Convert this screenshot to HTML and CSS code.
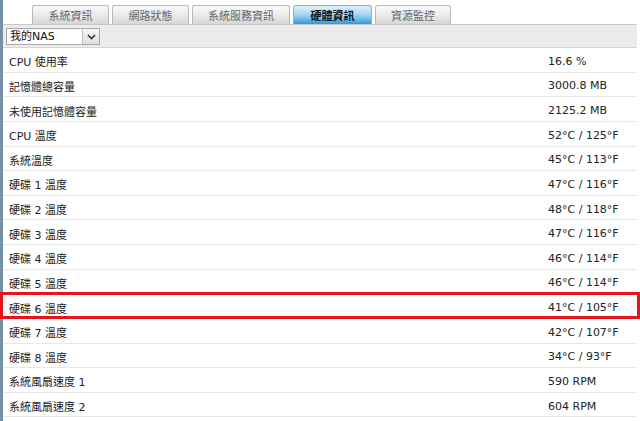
FILE: index.html
```html
<!DOCTYPE html>
<html lang="zh-Hant">
<head>
  <meta charset="UTF-8" />
  <title>硬體資訊</title>
  <link rel="stylesheet" href="styles.css">
</head>
<body>
  <div class="stripe"></div>
  <div class="panel">
    <div class="tabs">
      <div class="tab t1">系統資訊</div>
      <div class="tab t2">網路狀態</div>
      <div class="tab t3">系統服務資訊</div>
      <div class="tab t4 active">硬體資訊</div>
      <div class="tab t5">資源監控</div>
    </div>

    <div class="toolbar">
      <div class="select">
        <span class="select-text">我的NAS</span>
        <span class="select-btn">
          <svg width="9" height="6" viewBox="0 0 9 6"><path d="M1 1 L4.5 4.5 L8 1" fill="none" stroke="#333" stroke-width="1.6"/></svg>
        </span>
      </div>
    </div>

    <div class="rows">
      <div class="row"><span class="label">CPU 使用率</span><span class="value">16.6 %</span></div>
      <div class="row"><span class="label">記憶體總容量</span><span class="value">3000.8 MB</span></div>
      <div class="row"><span class="label">未使用記憶體容量</span><span class="value">2125.2 MB</span></div>
      <div class="row"><span class="label">CPU 溫度</span><span class="value">52°C / 125°F</span></div>
      <div class="row"><span class="label">系統溫度</span><span class="value">45°C / 113°F</span></div>
      <div class="row"><span class="label">硬碟 1 溫度</span><span class="value">47°C / 116°F</span></div>
      <div class="row"><span class="label">硬碟 2 溫度</span><span class="value">48°C / 118°F</span></div>
      <div class="row"><span class="label">硬碟 3 溫度</span><span class="value">47°C / 116°F</span></div>
      <div class="row"><span class="label">硬碟 4 溫度</span><span class="value">46°C / 114°F</span></div>
      <div class="row"><span class="label">硬碟 5 溫度</span><span class="value">46°C / 114°F</span></div>
      <div class="row highlight"><span class="label">硬碟 6 溫度</span><span class="value">41°C / 105°F</span></div>
      <div class="row"><span class="label">硬碟 7 溫度</span><span class="value">42°C / 107°F</span></div>
      <div class="row"><span class="label">硬碟 8 溫度</span><span class="value">34°C / 93°F</span></div>
      <div class="row"><span class="label">系統風扇速度 1</span><span class="value">590 RPM</span></div>
      <div class="row"><span class="label">系統風扇速度 2</span><span class="value">604 RPM</span></div>
    </div>
  </div>
</body>
</html>
```

FILE: styles.css
```css
html, body {
  margin: 0;
  height: 100%;
  background: #fff;
}
body {
  display: flex;
  font-family: "DejaVu Sans", "Noto Sans CJK TC", sans-serif;
  font-size: 11px;
  color: #222;
  overflow: hidden;
}
.stripe {
  width: 3px;
  background: #7390a6;
  flex-shrink: 0;
}
.panel {
  width: 634px;
  position: relative;
}

/* tabs */
.tabs {
  display: flex;
  align-items: flex-end;
  height: 24px;
  padding-left: 29px;
  border-bottom: 1px solid #c8c8c8;
}
.tab {
  height: 19px;
  margin-right: 3px;
  border: 1px solid #b9b9b9;
  border-bottom: none;
  border-radius: 3px 3px 0 0;
  background: linear-gradient(#fbfbfb, #e9e9e9 55%, #d6d6d6);
  color: #666;
  font-family: "Noto Sans CJK TC", sans-serif;
  font-size: 11px;
  display: flex;
  align-items: center;
  justify-content: center;
  box-sizing: border-box;
}
.t1 { width: 77px; }
.t2 { width: 77px; }
.t3 { width: 98px; }
.t4 { width: 79px; }
.t5 { width: 76px; }
.tab.active {
  background: linear-gradient(#dff1fb, #a9d8f3 45%, #4fb0e3 85%, #2f97d4);
  border-color: #7fb5d6;
  color: #111;
  font-weight: bold;
}

/* toolbar */
.toolbar {
  height: 23px;
  background: #ececec;
  border-bottom: 1px solid #d6d6d6;
  padding: 3px 0 0 3px;
  box-sizing: border-box;
}
.select {
  display: flex;
  width: 94px;
  height: 17px;
  border: 1px solid #a9a9a9;
  background: #fff;
  box-sizing: border-box;
}
.select-text {
  flex: 1;
  padding-left: 3px;
  line-height: 15px;
  font-family: "DejaVu Sans", "Noto Sans CJK TC", sans-serif;
  font-size: 11px;
  color: #111;
}
.select-btn {
  width: 16px;
  border-left: 1px solid #bdbdbd;
  background: linear-gradient(#f7f7f7, #dedede);
  display: flex;
  align-items: center;
  justify-content: center;
}

/* rows */
.row {
  display: grid;
  grid-template-columns: 545px 1fr;
  align-items: center;
  height: 24.64px;
  box-sizing: border-box;
  border-bottom: 1px solid #e8e8e8;
  padding-top: 3px;
}
.label {
  padding-left: 6px;
}
.highlight {
  position: relative;
}
.highlight::after {
  content: "";
  position: absolute;
  left: -3px;
  right: -3px;
  top: -2px;
  bottom: -1px;
  border: 3px solid #e8141b;
}
```
